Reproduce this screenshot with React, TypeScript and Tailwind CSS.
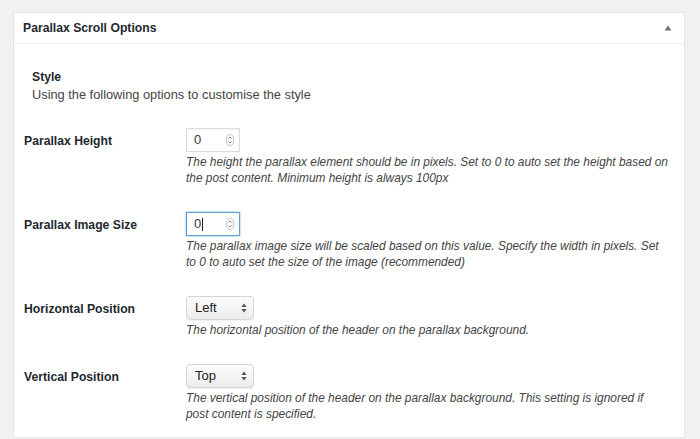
import React from "react";

function Spinner() {
  return (
    <svg width="8" height="12" viewBox="0 0 8 12" className="shrink-0">
      <rect x="0.5" y="0.5" width="7" height="11" rx="3.5" fill="#fff" stroke="#c8c8c8" />
      <path d="M2.3 4.6 L4 2.9 L5.7 4.6" fill="none" stroke="#777" strokeWidth="0.9" />
      <path d="M2.3 7.4 L4 9.1 L5.7 7.4" fill="none" stroke="#777" strokeWidth="0.9" />
    </svg>
  );
}

function NumberBox({ focused }: { focused?: boolean }) {
  return (
    <div
      className={
        focused
          ? "flex h-[24px] w-[54px] items-center justify-between border border-[#5b9dd9] bg-white pl-[7px] pr-[5px] shadow-[0_0_2px_rgba(30,140,190,0.6)]"
          : "flex h-[24px] w-[54px] items-center justify-between border border-[#dcdcdc] bg-white pl-[7px] pr-[5px] shadow-[inset_0_1px_2px_rgba(0,0,0,0.05)]"
      }
    >
      <span className="flex items-center text-[13px] text-[#32373c]">
        0{focused && <span className="ml-[1px] inline-block h-[13px] w-px bg-[#222]" />}
      </span>
      <Spinner />
    </div>
  );
}

function SelectBox({ value }: { value: string }) {
  return (
    <div className="flex h-[24px] w-[68px] items-center justify-between rounded-[4px] border border-[#d6d6d6] bg-gradient-to-b from-[#fcfcfc] to-[#ececec] pl-[8px] pr-[6px] shadow-[0_1px_1px_rgba(0,0,0,0.06)]">
      <span className="text-[13px] text-[#222]">{value}</span>
      <svg width="6" height="10" viewBox="0 0 6 10">
        <path d="M3 0.5 L5.6 4 H0.4 Z" fill="#555" />
        <path d="M3 9.5 L5.6 6 H0.4 Z" fill="#555" />
      </svg>
    </div>
  );
}

function Row({
  label,
  control,
  lines,
}: {
  label: string;
  control: React.ReactNode;
  lines: string[];
}) {
  return (
    <div className="flex py-[13px]">
      <div className="w-[172px] shrink-0 pl-[10px] pt-[4px] text-[12.2px] font-bold text-[#23282d]">{label}</div>
      <div className="flex flex-col">
        {control}
        <div className="mt-[2px] text-[11.9px] italic leading-[16px] text-[#444]">
          {lines.map((l) => (
            <div key={l}>{l}</div>
          ))}
        </div>
      </div>
    </div>
  );
}

export default function App() {
  return (
    <div
      className="h-[439px] w-[700px] overflow-hidden bg-[#f1f1f1] pl-[13px] pr-[15px] pt-[12px]"
      style={{ fontFamily: '"Liberation Sans", Arial, sans-serif' }}
    >
      <div className="h-[426px] border border-[#e5e5e5] bg-white">
        <div className="flex h-[31px] items-center justify-between border-b border-[#eeeeee] pl-[9px] pr-[12px]">
          <h2 className="pt-[1px] text-[12.2px] font-bold text-[#23282d]">Parallax Scroll Options</h2>
          <svg width="8" height="6" viewBox="0 0 8 6">
            <path d="M4 0.5 L7.5 5.5 H0.5 Z" fill="#777" />
          </svg>
        </div>
        <div className="pl-[18px] pt-[24px]">
          <div className="text-[12.2px] font-bold leading-[18px] text-[#23282d]">Style</div>
          <div className="text-[12.8px] leading-[18px] text-[#444]">Using the following options to customise the style</div>
        </div>
        <div className="mt-[11px]">
          <Row
            label="Parallax Height"
            control={<NumberBox />}
            lines={[
              "The height the parallax element should be in pixels. Set to 0 to auto set the height based on",
              "the post content. Minimum height is always 100px",
            ]}
          />
          <Row
            label="Parallax Image Size"
            control={<NumberBox focused />}
            lines={[
              "The parallax image size will be scaled based on this value. Specify the width in pixels. Set",
              "to 0 to auto set the size of the image (recommended)",
            ]}
          />
          <Row
            label="Horizontal Position"
            control={<SelectBox value="Left" />}
            lines={["The horizontal position of the header on the parallax background."]}
          />
          <Row
            label="Vertical Position"
            control={<SelectBox value="Top" />}
            lines={[
              "The vertical position of the header on the parallax background. This setting is ignored if",
              "post content is specified.",
            ]}
          />
        </div>
      </div>
    </div>
  );
}
